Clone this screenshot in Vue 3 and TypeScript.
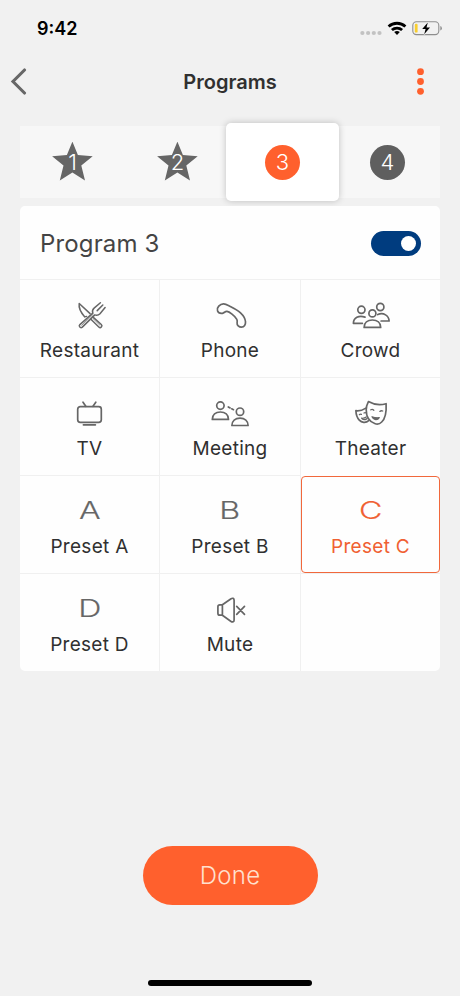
<script setup lang="ts">
import { ref } from 'vue'

interface Program {
  icon: string
  label: string
  letter?: string
}

const rows: Program[] = [
  { icon: 'restaurant', label: 'Restaurant' },
  { icon: 'phone', label: 'Phone' },
  { icon: 'crowd', label: 'Crowd' },
  { icon: 'tv', label: 'TV' },
  { icon: 'meeting', label: 'Meeting' },
  { icon: 'theater', label: 'Theater' },
  { icon: 'letter', label: 'Preset A', letter: 'A' },
  { icon: 'letter', label: 'Preset B', letter: 'B' },
  { icon: 'letter', label: 'Preset C', letter: 'C' },
  { icon: 'letter', label: 'Preset D', letter: 'D' },
  { icon: 'mute', label: 'Mute' },
]

const tabs = [
  { id: 1, star: true },
  { id: 2, star: true },
  { id: 3, star: false },
  { id: 4, star: false },
]

const activeTab = ref(3)
const selected = ref('Preset C')
const enabled = ref(true)
</script>

<template>
  <main class="screen">
    <div class="status">
      <span class="time">9:42</span>
      <svg class="indicators" width="84" height="18" viewBox="0 0 84 18">
        <g fill="#c2c2c2">
          <circle cx="2.4" cy="13" r="2.1" /><circle cx="8.1" cy="13" r="2.1" />
          <circle cx="13.8" cy="13" r="2.1" /><circle cx="19.5" cy="13" r="2.1" />
        </g>
        <g fill="none" stroke="#000" stroke-width="2.8">
          <path d="M28.6 6.6a12.2 12.2 0 0 1 16.8 0" />
          <path d="M31.9 10a7.6 7.6 0 0 1 10.2 0" />
        </g>
        <path d="M34.2 12.1a4.4 4.4 0 0 1 5.6 0L37 14.9z" />
        <rect x="52.8" y="1.8" width="26" height="12.8" rx="3.6" fill="none" stroke="#8e8e8e" stroke-width="1.1" />
        <rect x="54.8" y="3.8" width="2.8" height="8.8" rx="1.2" fill="#f9ce2f" />
        <path d="M80.3 6v4.6q1.6-.5 1.6-2.3T80.3 6z" fill="#8e8e8e" />
        <path d="M67.8 2.4 62.2 9h3.4l-1.4 5.2L70 7.5h-3.5z" stroke="#f1f1f1" stroke-width="1.6" paint-order="stroke" />
      </svg>
    </div>

    <header class="nav">
      <button class="icon-button" aria-label="Back">
        <svg width="18" height="28" viewBox="0 0 18 28"><path d="M14.5 2 3 13.5 14.5 25" fill="none" stroke="#676767" stroke-width="3.1" stroke-linecap="round" /></svg>
      </button>
      <h1>Programs</h1>
      <button class="icon-button" aria-label="More">
        <svg width="8" height="28" viewBox="0 0 8 28" fill="#ff602d"><circle cx="4.5" cy="3.7" r="3.4" /><circle cx="4.5" cy="13.5" r="3.4" /><circle cx="4.5" cy="23.3" r="3.4" /></svg>
      </button>
    </header>

    <nav class="tabs">
      <button v-for="tab in tabs" :key="tab.id" class="tab" :class="{ active: activeTab === tab.id }" @click="activeTab = tab.id">
        <span class="badge" :class="{ round: !tab.star }">
          <svg v-if="tab.star" class="star" width="42" height="40" viewBox="0.6 1.2 42 40"><path d="m21 .8 5.5 13.5 14.8 1.1-11.4 9.4 3.7 14.8L21 31.8 8.4 39.6l3.7-14.8L.7 15.4l14.8-1.1z" fill="#666" /></svg>
          <span class="number">{{ tab.id }}</span>
        </span>
      </button>
    </nav>

    <section class="card">
      <div class="card-head">
        <h2>Program 3</h2>
        <button class="toggle" :class="{ on: enabled }" aria-label="Program enabled" @click="enabled = !enabled"><span class="knob"></span></button>
      </div>
      <div class="grid">
        <button v-for="item in rows" :key="item.label" class="cell" :class="{ selected: selected === item.label }" @click="selected = item.label">
          <svg class="glyph" width="40" height="32" viewBox="0 0 40 32" fill="none" stroke="currentColor" stroke-width="1.7" stroke-linecap="round" stroke-linejoin="round">
            <g v-if="item.icon === 'restaurant'" stroke-width="1.5">
              <path d="M16.6 16.4 14.8 16.9C11.3 13 8.4 8.5 9.2 3.5L20.1 13.6M22.8 16.9l8.5 7.6c1.7 1.8-.7 4.2-2.5 2.5l-7.9-7.7" />
              <path d="m30.4 2.7-6.3 5.4c-1.6 1.4-2 3.1-1.3 5L9.9 24.6c-1.7 1.8.6 4 2.4 2.5L24.8 14.9c2 .7 3.7.3 5.2-1.2l5.1-6.1M32.8 5l-5.6 5.6" />
              <path d="m23.3 18.8 6.6 6.4M11.7 25.3l11.5-11" stroke-width=".7" />
            </g>
            <path v-else-if="item.icon === 'phone'" d="M7.5 10.7C6.3 7.7 10 3.8 13.6 3.9c2.2.1 3.9 1.2 6.7 2.6 4.1 2 7.6 3.9 10.2 6.3 2.8 2.6 4.8 5.8 5 9 .2 3-1.2 5.3-4 5.3-2.6 0-4.7-2-4.4-4.3.2-1.2.4-2.2-.3-3.5-1-1.8-2.9-3.6-4.8-5.1-1.7-1.4-3.2-2.6-5-2.8-2-.2-2.6 1.6-4.5 1.9-2.1.3-4.3-.6-5-2.6z" />
            <g v-else-if="item.icon === 'crowd'">
              <circle cx="10.4" cy="9.8" r="3.6" /><circle cx="29.3" cy="7" r="3.6" /><circle cx="21.4" cy="13.4" r="3.5" />
              <path d="M13.1 27.4c0-4.8 3.6-7.4 8.3-7.4s8.3 2.6 8.3 7.4zM11.4 23.3h-9c.1-5.4 5.3-8.4 11.6-6.2M26.8 14.6c5.7-2.6 11.2 1.2 11.3 6.4h-8" />
            </g>
            <g v-else-if="item.icon === 'tv'">
              <rect x="7.7" y="8.6" width="23.6" height="15.8" rx="2.6" /><path d="m13 4.2 2.8 4.1m10-4.1L23 8.3M13.4 26.8h12" />
            </g>
            <g v-else-if="item.icon === 'meeting'">
              <circle cx="10.4" cy="7.6" r="3.7" /><circle cx="30" cy="13.7" r="3.7" />
              <path d="M2.3 21.4c.1-4.6 3.3-7.4 8.1-7.4s8 2.8 8.1 7.4zM21.9 27.5c.1-4.6 3.3-7.4 8.1-7.4s8 2.8 8.1 7.4zM18.3 8.9l1.8 1m1.6.9 1.8.9" />
            </g>
            <g v-else-if="item.icon === 'theater'">
              <path d="M17.4 3.6c5.4 3.1 11.8 3.9 17.7 2.1.3 5.2-.3 14.3-4.4 18.3-1.8 1.9-4.3 2.5-6.5 1.8-6-1.9-9-7.4-9-14 0-3.2.8-5.5 2.2-8.2z" />
              <path d="M14.9 10.1c-3 2-6.5 3-10 2.6.1 3.1 1 6.8 3.4 9.4 2.3 2.4 6.3 3.4 9.4.6" />
              <path d="M19.8 11.8q1.6-1 3 .4m6 1.2q1.4-1.1 2.9-.4M8.4 16.6q1-.7 2-.2M13 15q1-.6 1.6-.2M10.6 20.2c1.8.3 3.2-.1 4.7-1.2m-4.7 1.2c1.1 1.8 3.3 1.7 5.5.4" stroke-width="1.3" />
              <path d="M21 18.7c2.4.9 4.8 1.3 7.3.9-1.8 3-5.6 2.8-7.3-.9z" stroke-width="1.2" fill="currentColor" />
            </g>
            <g v-else-if="item.icon === 'mute'">
              <path d="M12.4 10.8 20.7 5c2-1.4 3.4-.7 3.4 1.3v19.6c0 2-1.4 2.7-3.4 1.3l-8.3-6zM12.4 10.8H9.8c-1.3 0-1.9.6-1.9 2v6.4c0 1.4.6 2 1.9 2h2.6M26.7 12.3l7.8 8.1m0-8.1-7.8 8.1" />
            </g>
            <text v-else class="letter" transform="translate(19.8 23.2) scale(1.34 1)" text-anchor="middle">{{ item.letter }}</text>
          </svg>
          <span class="label">{{ item.label }}</span>
        </button>
        <span class="cell"></span>
      </div>
    </section>

    <button class="done">Done</button>
    <div class="home"></div>
  </main>
</template>

<style>
body {
  background: #f1f1f1;
}
</style>

<style scoped>
* {
  box-sizing: border-box;
}
button {
  border: 0;
  padding: 0;
  background: none;
  font: inherit;
  color: inherit;
}
svg {
  display: block;
}
.screen {
  width: 460px;
  height: 996px;
  display: flex;
  flex-direction: column;
  align-items: center;
  background: #f1f1f1;
  color: #303030;
  font-family: Inter, 'Liberation Sans', sans-serif;
}
.status {
  width: 100%;
  height: 55px;
  padding: 19px 16px 0 37px;
  display: flex;
  justify-content: space-between;
}
.time {
  font-size: 18px;
  line-height: 20px;
  font-weight: 600;
  color: #000;
}
.indicators {
  margin-top: 1px;
}
.nav {
  width: 100%;
  height: 53px;
  padding: 0 36px 0 10px;
  display: grid;
  grid-template-columns: 26px 1fr 8px;
  align-items: center;
}
h1 {
  margin: 0;
  padding-left: 8px;
  text-align: center;
  font-size: 20px;
  font-weight: 600;
}
.tabs {
  width: 420px;
  height: 72px;
  margin-top: 18px;
  display: grid;
  grid-template-columns: repeat(4, 105px);
  background: #f7f7f7;
}
.tab {
  display: grid;
  place-items: center;
}
.tab.active {
  margin: -3px -4px;
  border-radius: 5px;
  background: #fff;
  box-shadow: 0 0 7px rgba(0, 0, 0, 0.22);
}
.badge {
  display: grid;
  place-items: center;
}
.badge > * {
  grid-area: 1 / 1;
}
.round {
  width: 35px;
  height: 35px;
  border-radius: 50%;
  background: #5f5f5f;
}
.active .round {
  background: #ff602d;
}
.number {
  color: #fff;
  font-size: 22px;
  line-height: 26px;
  font-weight: 300;
}
.card {
  width: 420px;
  margin-top: 8px;
  border-radius: 5px;
  background: #fefefe;
}
.card-head {
  height: 73px;
  padding: 1px 19px 0 20px;
  display: flex;
  align-items: center;
  justify-content: space-between;
}
h2 {
  margin: 0;
  font-size: 24px;
  font-weight: 400;
  letter-spacing: 0.15px;
  color: #444;
}
.toggle {
  width: 50px;
  height: 25px;
  padding: 5px;
  display: flex;
  border-radius: 13px;
  background: #999;
}
.toggle.on {
  justify-content: flex-end;
  background: #003c7f;
}
.knob {
  width: 15px;
  height: 15px;
  border-radius: 50%;
  background: #fff;
}
.grid {
  display: grid;
  grid-template-columns: 140px 141px 139px;
  grid-auto-rows: 98px;
}
.cell {
  display: flex;
  flex-direction: column;
  align-items: center;
  padding-top: 20px;
  border-top: 1px solid #f0f0f0;
  border-right: 1px solid #f0f0f0;
}
.cell:nth-child(3n) {
  border-right: 0;
}
.glyph {
  color: #666;
}
.letter {
  font: 300 24px Inter, 'Liberation Sans', sans-serif;
  fill: currentColor;
  stroke: currentColor;
  stroke-width: 0.15px;
}
.label {
  margin-top: 6.5px;
  font-size: 19px;
  line-height: 24px;
  letter-spacing: 0.28px;
}
.cell.selected {
  margin-top: 1px;
  padding-top: 19px;
  border: 1px solid #f1683c;
  border-radius: 4px;
  color: #f06032;
}
.selected .glyph {
  color: #f06032;
}
.done {
  width: 175px;
  height: 59px;
  margin-top: 175px;
  border-radius: 30px;
  background: #ff602d;
  color: #ffe1cf;
  font-size: 24px;
  letter-spacing: 0.3px;
  font-weight: 300;
}
.home {
  width: 164px;
  height: 6px;
  margin-top: 75px;
  border-radius: 3px;
  background: #000;
}
</style>
